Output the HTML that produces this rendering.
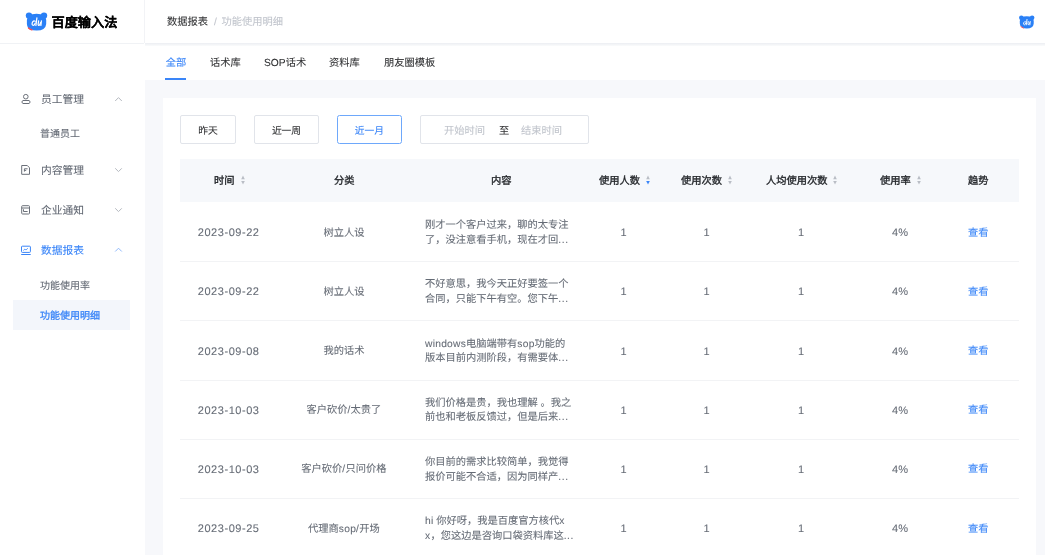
<!DOCTYPE html>
<html lang="zh-CN"><head><meta charset="utf-8">
<style>
*{margin:0;padding:0;box-sizing:border-box}
html{background:#fff} body{will-change:transform;width:1045px;height:555px;overflow:hidden;font-family:"Liberation Sans",sans-serif;text-rendering:geometricPrecision;-webkit-text-stroke-width:0.08px}
.abs{position:absolute}
.c{width:160px;text-align:center}
#logoarea{left:0;top:0;width:144px;height:44px;border-bottom:1px solid #f0f2f5}
#vline{left:144px;top:0;width:1px;height:43px;background:#f2f3f6}
#hdrshadow{left:145px;top:43px;width:900px;height:2.5px;background:linear-gradient(#eceef2,#fafbfc)}
.bc{font-size:10.25px;line-height:12px;white-space:nowrap}
#bg{left:145px;top:80px;width:900px;height:475px;background:#f7f8fb}
#card{left:162.5px;top:97.5px;width:873.5px;height:460px;background:#fff}
.tab{font-size:10.25px;white-space:nowrap;color:#303133;top:57.5px;line-height:12px}
.menu{font-size:10.75px;white-space:nowrap;color:#626873;line-height:12px}
.sub{font-size:10px;white-space:nowrap;color:#626873;line-height:12px}
.btn{border:1px solid #e1e4ea;border-radius:2px;height:28.5px;top:115px;font-size:9.75px;color:#303133;text-align:center;line-height:26.5px;padding-top:3px}
#thead{left:180px;top:159px;width:838.5px;height:43.2px;background:#f6f8fb}
.th{font-size:10.25px;font-weight:500;-webkit-text-stroke-width:0.35px;color:#24272b;top:176px;line-height:12px;white-space:nowrap}
.rowline{left:180px;width:838.5px;height:1px;background:#f2f3f5}
.td{font-size:10.25px;color:#656b75;white-space:nowrap;line-height:12px}
.date{font-size:11px;letter-spacing:0.55px}
.num{font-size:11px}
.ct{line-height:14.6px} .lt{letter-spacing:0.25px} .dots{letter-spacing:0.6px}
</style></head><body>
<div class="abs" id="logoarea"></div>
<div class="abs" id="vline"></div>
<div class="abs" id="hdrshadow"></div>
<svg class="abs" style="left:23px;top:9px" width="27" height="24" viewBox="0 0 27 24"><circle cx="6" cy="6.6" r="3.2" fill="#2a80f6"/><circle cx="21" cy="6.6" r="3.2" fill="#2a80f6"/><path d="M5 6.3 Q13.5 3 22 6.3 Q23.6 10.5 23.2 15 Q22.6 21.6 13.6 21.6 Q9.5 21.6 7.3 20.6 Q4.2 19 3.9 15 Q3.5 10.5 5 7Z" fill="#2a80f6"/><path d="M5.6 19.2 Q7 20.6 9.2 21.3" stroke="#fff" stroke-width="1.2" fill="none"/><path d="M5.5 18.9 Q6.8 20.1 8.9 20.9" stroke="#f4474a" stroke-width="1.3" stroke-linecap="round" fill="none"/><g fill="none" stroke="#fff" stroke-width="1.25" stroke-linecap="round"><path d="M12.2 12.3 Q10.2 11.2 9.3 13.6 Q8.6 16.3 10.3 16.4 Q11.6 16.3 12.2 14.2"/><path d="M13.9 8.9 L12.9 16.5"/><path d="M15.6 11.8 L15.1 15.4 Q15.2 16.6 16.3 16.2 Q17.2 15.6 17.5 13.6"/><path d="M18.4 11.8 L17.9 16.5"/></g></svg>
<div class="abs" style="left:51.5px;top:14.8px;font-size:13.2px;font-weight:bold;color:#000;line-height:16px;white-space:nowrap;-webkit-text-stroke:0.12px #000">百度输入法</div>
<div class="abs bc" style="left:167px;top:16.5px;color:#303133">数据报表 <span style="color:#c0c4cc;margin:0 1.8px 0 3.2px">/</span> <span style="color:#c0c4cc">功能使用明细</span></div>
<svg class="abs" style="left:1017px;top:13.1px" width="19.44" height="17.28" viewBox="0 0 27 24" overflow="visible"><circle cx="6" cy="6.6" r="3.2" fill="#2a80f6"/><circle cx="21" cy="6.6" r="3.2" fill="#2a80f6"/><path d="M5 6.3 Q13.5 3 22 6.3 Q23.6 10.5 23.2 15 Q22.6 21.6 13.6 21.6 Q9.5 21.6 7.3 20.6 Q4.2 19 3.9 15 Q3.5 10.5 5 7Z" fill="#2a80f6"/><path d="M5.6 19.2 Q7 20.6 9.2 21.3" stroke="#fff" stroke-width="1.2" fill="none"/><path d="M5.5 18.9 Q6.8 20.1 8.9 20.9" stroke="#f4474a" stroke-width="1.3" stroke-linecap="round" fill="none"/><g fill="none" stroke="#fff" stroke-width="1.25" stroke-linecap="round"><path d="M12.2 12.3 Q10.2 11.2 9.3 13.6 Q8.6 16.3 10.3 16.4 Q11.6 16.3 12.2 14.2"/><path d="M13.9 8.9 L12.9 16.5"/><path d="M15.6 11.8 L15.1 15.4 Q15.2 16.6 16.3 16.2 Q17.2 15.6 17.5 13.6"/><path d="M18.4 11.8 L17.9 16.5"/></g></svg>
<div class="abs tab" style="left:165.7px;color:#3a85f8">全部</div>
<div class="abs" style="left:165px;top:78px;width:21px;height:2px;background:#3a85f8"></div>
<div class="abs tab" style="left:210px">话术库</div>
<div class="abs tab" style="left:264px">SOP话术</div>
<div class="abs tab" style="left:329px">资料库</div>
<div class="abs tab" style="left:384px">朋友圈模板</div>
<!-- sidebar -->
<svg class="abs" style="left:0;top:80px" width="145" height="260" viewBox="0 80 145 260" fill="none" stroke-width="1">
  <g stroke="#6b7079">
    <circle cx="25.8" cy="96.7" r="2.3"/>
    <path d="M23 100.5 H29 A2 1.7 0 0 1 29 103.5 H23 A2 1.7 0 0 1 23 100.5Z"/>
    <path d="M21.7 165.5 H27.3 L29.5 167.8 V174.3 H21.7Z"/>
    <path d="M24.4 171.6 V168.8 H27.6 M24.4 170.4 H26.2"/>
    <rect x="21.7" y="205.7" width="7.8" height="8.3" rx="0.8"/>
    <path d="M21.7 208 H29.5 M23.5 209.3 V211.5 H27.6"/>
  </g>
  <g stroke="#3a85f8">
    <rect x="21.5" y="246.2" width="8.9" height="6.2" rx="0.8"/>
    <path d="M21.2 254.5 H30.7"/>
    <path d="M23.4 250.4 Q24.5 248.8 25.5 249.6 Q26.5 250.3 27.6 248.3"/>
  </g>
  <g stroke="#b4b8bf">
    <path d="M115.2 101 L118.5 97.6 L121.8 101"/>
    <path d="M115.2 168.3 L118.5 171.6 L121.8 168.3"/>
    <path d="M115.2 208.3 L118.5 211.6 L121.8 208.3"/>
  </g>
  <path d="M115.2 251.5 L118.5 248.2 L121.8 251.5" stroke="#8fb8fb"/>
</svg>
<div class="abs menu" style="left:41px;top:93.5px">员工管理</div>
<div class="abs sub" style="left:40px;top:129px">普通员工</div>
<div class="abs menu" style="left:41px;top:164.5px">内容管理</div>
<div class="abs menu" style="left:41px;top:204.5px">企业通知</div>
<div class="abs menu" style="left:41px;top:245px;color:#3a85f8">数据报表</div>
<div class="abs sub" style="left:40px;top:280.5px">功能使用率</div>
<div class="abs" style="left:12.5px;top:300px;width:117.5px;height:30px;background:#f3f6fb"></div>
<div class="abs sub" style="left:40px;top:310.5px;color:#3a85f8;font-weight:500;-webkit-text-stroke-width:0.3px">功能使用明细</div>
<div class="abs" id="bg"></div>
<div class="abs" id="card"></div>
<div class="abs btn" style="left:180px;width:56px">昨天</div>
<div class="abs btn" style="left:254px;width:65px">近一周</div>
<div class="abs btn" style="left:336.7px;width:65.6px;border-color:#6ea8fb;border-radius:2.5px;color:#3a85f8">近一月</div>
<div class="abs btn" style="left:420.2px;width:169px"></div>
<div class="abs td" style="left:444px;top:125.6px;color:#c0c4cc">开始时间</div>
<div class="abs td" style="left:499px;top:125.6px;color:#303133">至</div>
<div class="abs td" style="left:521px;top:125.6px;color:#c0c4cc">结束时间</div>
<div class="abs" id="thead"></div>
<div class="abs th" style="left:214px">时间</div>
<div class="abs th" style="left:334px">分类</div>
<div class="abs th" style="left:491px">内容</div>
<div class="abs th" style="left:599px">使用人数</div>
<div class="abs th" style="left:681px">使用次数</div>
<div class="abs th" style="left:766px">人均使用次数</div>
<div class="abs th" style="left:880px">使用率</div>
<div class="abs th" style="left:968px">趋势</div>
<svg class="abs" style="left:240.6px;top:175.1px" width="4" height="10" viewBox="0 0 4 10"><path d="M0.2 4.2 L2 0.5 L3.8 4.2Z" fill="#b9bdc5"/><path d="M0.2 5.9 L2 9.6 L3.8 5.9Z" fill="#b9bdc5"/></svg>
<svg class="abs" style="left:645.9px;top:175.1px" width="4" height="10" viewBox="0 0 4 10"><path d="M0.2 4.2 L2 0.5 L3.8 4.2Z" fill="#b9bdc5"/><path d="M0.2 5.9 L2 9.6 L3.8 5.9Z" fill="#3a85f8"/></svg>
<svg class="abs" style="left:728.1px;top:175.1px" width="4" height="10" viewBox="0 0 4 10"><path d="M0.2 4.2 L2 0.5 L3.8 4.2Z" fill="#b9bdc5"/><path d="M0.2 5.9 L2 9.6 L3.8 5.9Z" fill="#b9bdc5"/></svg>
<svg class="abs" style="left:833.4px;top:175.1px" width="4" height="10" viewBox="0 0 4 10"><path d="M0.2 4.2 L2 0.5 L3.8 4.2Z" fill="#b9bdc5"/><path d="M0.2 5.9 L2 9.6 L3.8 5.9Z" fill="#b9bdc5"/></svg>
<svg class="abs" style="left:916.8px;top:175.1px" width="4" height="10" viewBox="0 0 4 10"><path d="M0.2 4.2 L2 0.5 L3.8 4.2Z" fill="#b9bdc5"/><path d="M0.2 5.9 L2 9.6 L3.8 5.9Z" fill="#b9bdc5"/></svg>

<div class="abs td date c" style="left:148.65px;top:227.10px;">2023-09-22</div>
<div class="abs td c" style="left:263.90px;top:227.60px;">树立人设</div>
<div class="abs td ct" style="left:425px;top:219.20px">刚才一个客户过来，聊的太专注<br>了，没注意看手机，现在才回<span class=dots>...</span></div>
<div class="abs td num c" style="left:543.50px;top:227.10px;">1</div>
<div class="abs td num c" style="left:626.50px;top:227.10px;">1</div>
<div class="abs td num c" style="left:721.00px;top:227.10px;">1</div>
<div class="abs td num c" style="left:820.00px;top:227.10px;">4%</div>
<div class="abs td c" style="left:898.15px;top:227.60px;color:#3a85f8">查看</div>
<div class="abs rowline" style="top:261.20px"></div>
<div class="abs td date c" style="left:148.65px;top:286.30px;">2023-09-22</div>
<div class="abs td c" style="left:263.90px;top:286.80px;">树立人设</div>
<div class="abs td ct" style="left:425px;top:278.40px">不好意思，我今天正好要签一个<br>合同，只能下午有空。您下午<span class=dots>...</span></div>
<div class="abs td num c" style="left:543.50px;top:286.30px;">1</div>
<div class="abs td num c" style="left:626.50px;top:286.30px;">1</div>
<div class="abs td num c" style="left:721.00px;top:286.30px;">1</div>
<div class="abs td num c" style="left:820.00px;top:286.30px;">4%</div>
<div class="abs td c" style="left:898.15px;top:286.80px;color:#3a85f8">查看</div>
<div class="abs rowline" style="top:320.40px"></div>
<div class="abs td date c" style="left:148.65px;top:345.50px;">2023-09-08</div>
<div class="abs td c" style="left:263.90px;top:346.00px;">我的话术</div>
<div class="abs td ct" style="left:425px;top:337.60px"><span class=lt>windows</span>电脑端带有<span class=lt>sop</span>功能的<br>版本目前内测阶段，有需要体<span class=dots>...</span></div>
<div class="abs td num c" style="left:543.50px;top:345.50px;">1</div>
<div class="abs td num c" style="left:626.50px;top:345.50px;">1</div>
<div class="abs td num c" style="left:721.00px;top:345.50px;">1</div>
<div class="abs td num c" style="left:820.00px;top:345.50px;">4%</div>
<div class="abs td c" style="left:898.15px;top:346.00px;color:#3a85f8">查看</div>
<div class="abs rowline" style="top:379.60px"></div>
<div class="abs td date c" style="left:148.65px;top:404.70px;">2023-10-03</div>
<div class="abs td c" style="left:263.90px;top:405.20px;">客户砍价<span class=lt>/</span>太贵了</div>
<div class="abs td ct" style="left:425px;top:396.80px">我们价格是贵，我也理解 。我之<br>前也和老板反馈过，但是后来<span class=dots>...</span></div>
<div class="abs td num c" style="left:543.50px;top:404.70px;">1</div>
<div class="abs td num c" style="left:626.50px;top:404.70px;">1</div>
<div class="abs td num c" style="left:721.00px;top:404.70px;">1</div>
<div class="abs td num c" style="left:820.00px;top:404.70px;">4%</div>
<div class="abs td c" style="left:898.15px;top:405.20px;color:#3a85f8">查看</div>
<div class="abs rowline" style="top:438.80px"></div>
<div class="abs td date c" style="left:148.65px;top:463.90px;">2023-10-03</div>
<div class="abs td c" style="left:263.90px;top:464.40px;">客户砍价<span class=lt>/</span>只问价格</div>
<div class="abs td ct" style="left:425px;top:456.00px">你目前的需求比较简单，我觉得<br>报价可能不合适，因为同样产<span class=dots>...</span></div>
<div class="abs td num c" style="left:543.50px;top:463.90px;">1</div>
<div class="abs td num c" style="left:626.50px;top:463.90px;">1</div>
<div class="abs td num c" style="left:721.00px;top:463.90px;">1</div>
<div class="abs td num c" style="left:820.00px;top:463.90px;">4%</div>
<div class="abs td c" style="left:898.15px;top:464.40px;color:#3a85f8">查看</div>
<div class="abs rowline" style="top:498.00px"></div>
<div class="abs td date c" style="left:148.65px;top:523.10px;">2023-09-25</div>
<div class="abs td c" style="left:263.90px;top:523.60px;">代理商<span class=lt>sop/</span>开场</div>
<div class="abs td ct" style="left:425px;top:515.20px"><span class=lt>hi</span> 你好呀，我是百度官方核代<span class=lt>x</span><br><span class=lt>x</span>，您这边是咨询口袋资料库这<span class=dots>...</span></div>
<div class="abs td num c" style="left:543.50px;top:523.10px;">1</div>
<div class="abs td num c" style="left:626.50px;top:523.10px;">1</div>
<div class="abs td num c" style="left:721.00px;top:523.10px;">1</div>
<div class="abs td num c" style="left:820.00px;top:523.10px;">4%</div>
<div class="abs td c" style="left:898.15px;top:523.60px;color:#3a85f8">查看</div>
<div class="abs rowline" style="top:557.20px"></div>

</body></html>
